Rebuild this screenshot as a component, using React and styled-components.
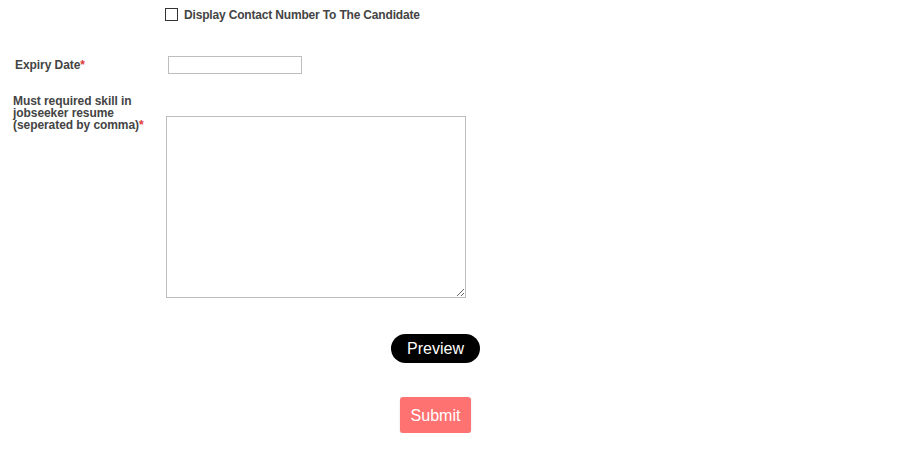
import styled, { createGlobalStyle } from "styled-components"

const GlobalStyle = createGlobalStyle`
  body {
    margin: 0;
    background: #fff;
    font-family: "Liberation Sans", Arial, sans-serif;
  }
`

const Form = styled.form`
  width: 871px;
  padding-top: 8px;
`

const CheckRow = styled.label`
  display: flex;
  align-items: center;
  gap: 6px;
  margin-left: 165px;
  font-size: 12px;
  font-weight: bold;
  letter-spacing: -0.17px;
  color: #444;
  line-height: 14px;
`

const Check = styled.input`
  appearance: none;
  margin: 0 0 1px;
  width: 13px;
  height: 13px;
  border: 1px solid #333;
  background: #fff;
`

const Row = styled.div`
  display: flex;
  align-items: ${({ top }) => (top ? "flex-start" : "center")};
  margin-top: ${({ gap }) => gap}px;
`

const Label = styled.div`
  box-sizing: border-box;
  width: ${({ w }) => w}px;
  padding-left: ${({ indent }) => indent}px;
  padding-right: 8px;
  font-size: 12px;
  font-weight: bold;
  letter-spacing: -0.07px;
  color: #444;
  line-height: 12px;
`

const Star = styled.span`
  color: #e03a3a;
`

const TextInput = styled.input`
  box-sizing: border-box;
  width: 134px;
  height: 18px;
  margin: 0;
  border: 1px solid #bdbdbd;
  padding: 1px 3px;
`

const TextArea = styled.textarea`
  box-sizing: border-box;
  width: 300px;
  height: 182px;
  margin: 21px 0 0;
  border: 1px solid #bdbdbd;
  padding: 2px;
`

const Actions = styled.div`
  display: flex;
  flex-direction: column;
  align-items: center;
`

const PreviewButton = styled.button`
  margin-top: 36px;
  width: 89px;
  height: 29px;
  border: none;
  border-radius: 15px;
  background: #000;
  color: #fff;
  font-family: "Liberation Sans", Arial, sans-serif;
  font-size: 16px;
  padding: 0;
`

const SubmitButton = styled.button`
  margin-top: 34px;
  width: 71px;
  height: 36px;
  border: none;
  border-radius: 3px;
  background: #ff7272;
  color: #fff;
  font-family: "Liberation Sans", Arial, sans-serif;
  font-size: 16px;
  padding: 2px 0 0;
  box-shadow: 0 1px 2px rgba(0, 0, 0, 0.15);
`

const App = () => {
  return (
    <>
      <GlobalStyle />
      <Form onSubmit={(e) => e.preventDefault()}>
        <CheckRow>
          <Check type="checkbox" />
          Display Contact Number To The Candidate
        </CheckRow>

        <Row gap={34}>
          <Label w={168} indent={15}>
            Expiry Date<Star>*</Star>
          </Label>
          <TextInput type="text" />
        </Row>

        <Row gap={21} top>
          <Label w={166} indent={13}>
            Must required skill in jobseeker resume (seperated by comma)<Star>*</Star>
          </Label>
          <TextArea />
        </Row>

        <Actions>
          <PreviewButton type="button">Preview</PreviewButton>
          <SubmitButton type="submit">Submit</SubmitButton>
        </Actions>
      </Form>
    </>
  )
}

export default App
